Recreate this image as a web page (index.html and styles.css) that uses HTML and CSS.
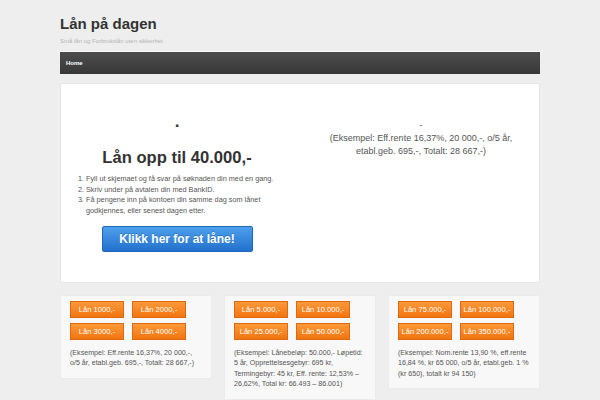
FILE: index.html
```html
<!DOCTYPE html>
<html lang="no">
<head>
<meta charset="utf-8">
<title>Lån på dagen</title>
<link rel="stylesheet" href="styles.css">
</head>
<body>
<div class="page">
  <header class="site-header">
    <h1 class="site-title">Lån på dagen</h1>
    <p class="site-desc">Små lån og Forbrukslån uten sikkerhet</p>
  </header>
  <nav class="main-nav">
    <a class="nav-link" href="#">Home</a>
  </nav>
  <section class="hero">
    <div class="hero-left">
      <p class="dot">.</p>
      <h2 class="hero-title">Lån opp til 40.000,-</h2>
      <ol class="steps">
        <li>Fyll ut skjemaet og få svar på søknaden din med en gang.</li>
        <li>Skriv under på avtalen din med BankID.</li>
        <li>Få pengene inn på kontoen din samme dag som lånet godkjennes, eller senest dagen etter.</li>
      </ol>
      <div class="cta-wrap"><a class="cta" href="#">Klikk her for at låne!</a></div>
    </div>
    <div class="hero-right">
      <p class="example">-<br>(Eksempel: Eff.rente 16,37%, 20 000,-, o/5 år, etabl.geb. 695,-, Totalt: 28 667,-)</p>
    </div>
  </section>
  <section class="offers">
    <div class="offer">
      <div class="btns">
        <a class="obtn" href="#">Lån 1000,-</a>
        <a class="obtn" href="#">Lån 2000,-</a>
        <a class="obtn" href="#">Lån 3000,-</a>
        <a class="obtn" href="#">Lån 4000,-</a>
      </div>
      <p class="otext">(Eksempel: Eff.rente 16,37%, 20 000,-, o/5 år, etabl.geb. 695,-, Totalt: 28 667,-)</p>
    </div>
    <div class="offer">
      <div class="btns">
        <a class="obtn" href="#">Lån 5.000,-</a>
        <a class="obtn" href="#">Lån 10.000,-</a>
        <a class="obtn" href="#">Lån 25.000,-</a>
        <a class="obtn" href="#">Lån 50.000,-</a>
      </div>
      <p class="otext">(Eksempel: Lånebeløp: 50.000,- Løpetid: 5 år, Opprettelsesgebyr: 695 kr, Termingebyr: 45 kr, Eff. rente: 12,53% – 26,62%, Total kr: 66.493 – 86.001)</p>
    </div>
    <div class="offer">
      <div class="btns">
        <a class="obtn" href="#">Lån 75.000,-</a>
        <a class="obtn" href="#">Lån 100.000,-</a>
        <a class="obtn" href="#">Lån 200.000,-</a>
        <a class="obtn" href="#">Lån 350.000,-</a>
      </div>
      <p class="otext">(Eksempel: Nom.rente 13,90 %, eff.rente 16,84 %, kr 65 000, o/5 år, etabl.geb. 1 % (kr 650), totalt kr 94 150)</p>
    </div>
  </section>
</div>
</body>
</html>
```
FILE: styles.css
```css
html, body {
  margin: 0;
  padding: 0;
  background: #eeeeee;
  font-family: "Liberation Sans", Arial, sans-serif;
  color: #555;
}
.page {
  width: 480px;
  margin: 0 auto;
}
.site-header {
  padding-top: 14px;
}
.site-title {
  margin: 0;
  font-size: 15px;
  line-height: 20px;
  font-weight: bold;
  color: #333;
}
.site-desc {
  margin: 3px 0 0;
  font-size: 6px;
  line-height: 8px;
  color: #b5b5b5;
}
.main-nav {
  margin-top: 6px;
  height: 23px;
  display: flex;
  align-items: center;
  padding: 0 6px;
  background: linear-gradient(#4d4d4d, #383838);
  border-top: 1px solid #fafafa;
  box-sizing: border-box;
}
.nav-link {
  color: #fff;
  font-weight: bold;
  font-size: 6px;
  text-decoration: none;
}
.hero {
  margin-top: 9px;
  background: #fff;
  border: 1px solid #e6e6e6;
  border-radius: 2px;
  box-sizing: border-box;
  height: 200px;
  padding: 28px 20px 0 17px;
  display: grid;
  grid-template-columns: 198px 198px;
  column-gap: 46px;
  align-items: start;
}
.hero-left {
  text-align: center;
}
.dot {
  margin: 0;
  font-size: 17px;
  line-height: 20px;
  font-weight: bold;
  color: #333;
}
.hero-title {
  margin: 16px 0 0;
  font-size: 16.6px;
  line-height: 20px;
  font-weight: bold;
  color: #333;
}
.steps {
  margin: 6px 0 0;
  padding-left: 8px;
  text-align: left;
  font-size: 7.3px;
  line-height: 10.7px;
  color: #555;
}
.cta-wrap {
  margin-top: 9px;
}
.cta {
  display: inline-block;
  width: 151px;
  height: 26px;
  line-height: 25px;
  box-sizing: border-box;
  border: 1px solid #1f65b8;
  border-radius: 2px;
  background: linear-gradient(#4da0ec, #2271cd);
  color: #fff;
  font-size: 12px;
  font-weight: bold;
  text-decoration: none;
  text-shadow: 0 -1px 0 rgba(0, 0, 0, 0.2);
}
.hero-right {
  padding-top: 7px;
  text-align: center;
}
.example {
  margin: 0;
  font-size: 9px;
  line-height: 13px;
  color: #555;
}
.offers {
  margin-top: 12px;
  display: grid;
  grid-template-columns: repeat(3, 1fr);
  column-gap: 12px;
  align-items: start;
}
.offer {
  background: #f8f8f8;
  border: 1px solid #ebebeb;
  padding: 5px 8px 9px 9px;
}
.btns {
  display: grid;
  grid-template-columns: 54px 54px;
  column-gap: 8px;
  row-gap: 5px;
}
.obtn {
  display: block;
  height: 17px;
  line-height: 16px;
  box-sizing: border-box;
  border: 1px solid #de6a10;
  background: linear-gradient(#fb9a3a, #f2740f);
  color: #fff;
  font-size: 7.6px;
  text-align: center;
  text-decoration: none;
}
.otext {
  margin: 8px 0 0;
  font-size: 7.1px;
  line-height: 10.4px;
  color: #555;
}
```
